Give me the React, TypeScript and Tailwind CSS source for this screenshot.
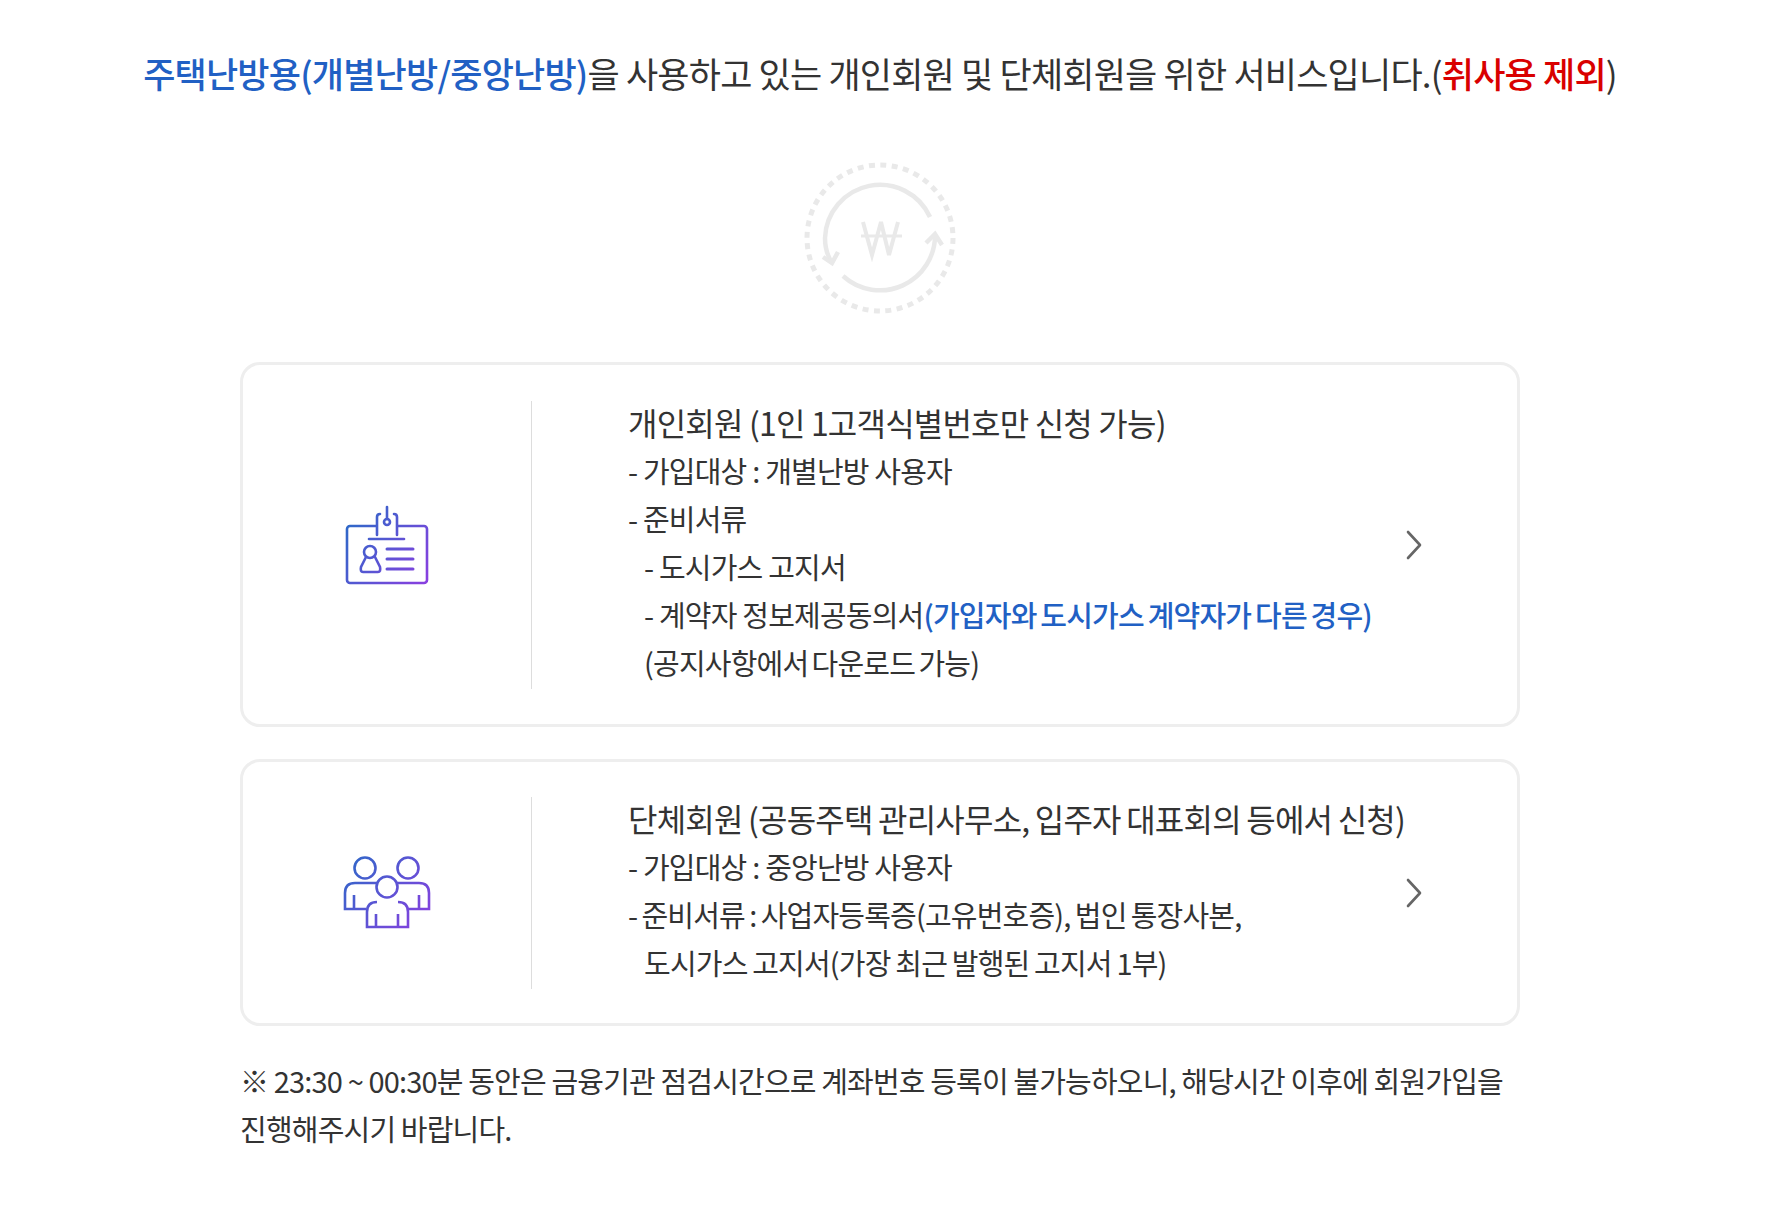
import React from "react"

const font = "font-['Noto_Sans_CJK_KR','Noto_Sans',sans-serif]"

function WonIcon() {
	return (
		<svg width="160" height="160" viewBox="0 0 160 160" fill="none" stroke="#e9e9e9" strokeWidth="4.5">
			<circle cx="80" cy="80" r="73" strokeWidth="5" strokeDasharray="6 5.46" />
			<path d="M130 59 A55 55 0 0 0 25 80 Q25 94 32 105" />
			<path d="M23 99 L32 105 L38 94" />
			<path d="M43 118 A55 55 0 0 0 135 76" />
			<path d="M126 85 L135 76 L142 87" />
			<path d="M63 64 L72 97 L81 64 L89 97 L98 64" strokeWidth="4" />
			<path d="M61 78 H102" strokeWidth="3" />
		</svg>
	)
}

function CardIcon() {
	return (
		<svg width="90" height="90" viewBox="12 5 90 90" fill="none" stroke="url(#g1)" strokeWidth="2.6" strokeLinecap="round">
			<defs>
				<linearGradient id="g1" gradientUnits="userSpaceOnUse" x1="17" y1="31" x2="97" y2="88">
					<stop offset="0" stopColor="#2f68c8" />
					<stop offset="1" stopColor="#8a3fe0" />
				</linearGradient>
			</defs>
			<path d="M46 31 H20 a3 3 0 0 0 -3 3 V85 a3 3 0 0 0 3 3 H94 a3 3 0 0 0 3 -3 V34 a3 3 0 0 0 -3 -3 H68" />
			<path d="M47 40 V22 q0 -3 3 -3" />
			<path d="M67 40 V22 q0 -3 -3 -3" />
			<path d="M57 12 V24" />
			<circle cx="57" cy="27" r="3" />
			<path d="M39 44 H74" />
			<circle cx="40" cy="57" r="6" />
			<path d="M36 62 L31 72 Q30 77 33 77 H48 Q51 77 50 72 L45 62" />
			<path d="M57 54 H83 M57 64 H83 M57 74 H83" strokeWidth="3" />
		</svg>
	)
}

function GroupIcon() {
	return (
		<svg width="90" height="90" viewBox="22 8 90 90" fill="none" stroke="url(#g2)" strokeWidth="2.6">
			<defs>
				<linearGradient id="g2" gradientUnits="userSpaceOnUse" x1="25" y1="20" x2="109" y2="87">
					<stop offset="0" stopColor="#2f68c8" />
					<stop offset="1" stopColor="#8a3fe0" />
				</linearGradient>
			</defs>
			<circle cx="45" cy="28" r="10.5" />
			<circle cx="88" cy="28" r="10.5" />
			<circle cx="67" cy="47" r="10.5" />
			<path d="M57 43 H35 Q25 43 25 53 V69 H46" />
			<path d="M34 55 V69" />
			<path d="M77 43 H99 Q109 43 109 53 V69 H88" />
			<path d="M99 55 V69" />
			<path d="M57 62 Q47 62 47 72 V87 H88 V72 Q88 62 78 62" />
			<path d="M56 74 V87 M78 74 V87" />
		</svg>
	)
}

function Chevron() {
	return (
		<svg width="16" height="30" viewBox="0 0 16 30" fill="none" stroke="#666" strokeWidth="2.6" strokeLinecap="round" strokeLinejoin="round" className="shrink-0">
			<path d="M2 2 L14 15 L2 28" />
		</svg>
	)
}

export default function App() {
	return (
		<div className={`${font} w-[1760px] min-h-[1216px] bg-white text-[#333] tracking-[-0.05em]`}>
			<p className="pt-[49px] text-center text-[35px] leading-[48px]">
				<span className="font-medium text-[#2160c4]">주택난방용(개별난방/중앙난방)</span>
				을 사용하고 있는 개인회원 및 단체회원을 위한 서비스입니다.(
				<span className="font-medium text-[#d90000]">취사용 제외</span>)
			</p>

			<div className="flex justify-center mt-[61px] mb-[44px]">
				<WonIcon />
			</div>

			<div className="w-[1280px] mx-auto">
				{/* 개인회원 */}
				<div className="flex items-center border-[3px] border-[#eeeeee] rounded-[20px] py-[35px] pr-[95px] h-[365px]">
					<div className="w-[288px] flex justify-center shrink-0">
						<CardIcon />
					</div>
					<div className="border-l border-[#dddddd] pl-[96px] flex-1 min-w-0 text-[29px] leading-[48px]">
						<div className="-translate-y-[3px]">
							<p className="text-[32px]">개인회원 (1인 1고객식별번호만 신청 가능)</p>
							<p>- 가입대상 : 개별난방 사용자</p>
							<p>- 준비서류</p>
							<p className="pl-4">- 도시가스 고지서</p>
							<p className="pl-4 whitespace-nowrap">
								- 계약자 정보제공동의서<span className="font-medium text-[#2160c4] [word-spacing:-1.9px]">(가입자와 도시가스 계약자가 다른 경우)</span>
							</p>
							<p className="pl-4 [word-spacing:-2.4px]">(공지사항에서 다운로드 가능)</p>
						</div>
					</div>
					<Chevron />
				</div>

				{/* 단체회원 */}
				<div className="flex items-center border-[3px] border-[#eeeeee] rounded-[20px] py-[35px] pr-[95px] h-[267px] mt-[32px]">
					<div className="w-[288px] flex justify-center shrink-0">
						<GroupIcon />
					</div>
					<div className="border-l border-[#dddddd] pl-[96px] flex-1 min-w-0 text-[29px] leading-[48px]">
						<div className="-translate-y-[3px]">
							<p className="text-[32px] whitespace-nowrap [word-spacing:-0.9px]">단체회원 (공동주택 관리사무소, 입주자 대표회의 등에서 신청)</p>
							<p>- 가입대상 : 중앙난방 사용자</p>
							<p className="whitespace-nowrap [word-spacing:-1.5px]">- 준비서류 : 사업자등록증(고유번호증), 법인 통장사본,</p>
							<p className="pl-4 [word-spacing:-1px]">도시가스 고지서(가장 최근 발행된 고지서 1부)</p>
						</div>
					</div>
					<Chevron />
				</div>

				<p className="mt-[30px] text-[29px] leading-[48px] [word-spacing:-0.2px]">
					※ 23:30 ~ 00:30분 동안은 금융기관 점검시간으로 계좌번호 등록이 불가능하오니, 해당시간 이후에 회원가입을 진행해주시기 바랍니다.
				</p>
			</div>
		</div>
	)
}
